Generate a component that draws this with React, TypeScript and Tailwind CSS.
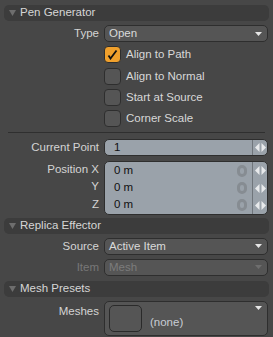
import React from "react";

const font = { fontFamily: '"Liberation Sans", Arial, sans-serif' };

function Header({ title }: { title: string }) {
  return (
    <div className="flex h-[16px] items-center rounded-[5px] bg-[#3c3c3c] pl-[5px] text-[11.5px] text-[#d6d6d6]">
      <svg width="7" height="6" viewBox="0 0 7 6" className="mr-[4px]">
        <path d="M0 0h7L3.5 6z" fill="#6e6e6e" />
      </svg>
      {title}
    </div>
  );
}

function Row({
  label,
  disabled,
  children,
}: {
  label: string;
  disabled?: boolean;
  children?: React.ReactNode;
}) {
  return (
    <div className="flex items-center">
      <div
        className={`w-[100px] shrink-0 pr-[5px] text-right text-[11.5px] ${
          disabled ? "text-[#777]" : "text-[#d4d4d4]"
        }`}
      >
        {label}
      </div>
      <div className="min-w-0 flex-1">{children}</div>
    </div>
  );
}

function DownArrow({ color = "#e6e6e6" }: { color?: string }) {
  return (
    <svg width="7" height="4" viewBox="0 0 7 4">
      <path d="M0 0h7L3.5 4z" fill={color} />
    </svg>
  );
}

function Select({ value, disabled }: { value: string; disabled?: boolean }) {
  return (
    <div
      className={`flex h-[17px] items-center justify-between rounded-[5px] border border-[#2e2e2e] bg-[#555555] pl-[4px] pr-[5px] text-[11.5px] ${
        disabled ? "text-[#7c7c7c]" : "text-[#dadada]"
      }`}
    >
      <span>{value}</span>
      <DownArrow color={disabled ? "#6e6e6e" : "#e6e6e6"} />
    </div>
  );
}

function Check({ label, on }: { label: string; on?: boolean }) {
  return (
    <Row label="">
      <div className="flex items-center gap-[5px]">
        <div
          className={`flex h-[17px] w-[17px] items-center justify-center rounded-[4px] border border-[#2e2e2e] ${
            on ? "bg-[#f0a02c]" : "bg-[#555555]"
          }`}
        >
          {on && (
            <svg width="11" height="11" viewBox="0 0 11 11">
              <path
                d="M1.5 6.5L3.5 9.5L9.5 1.5"
                fill="none"
                stroke="#111"
                strokeWidth="1.8"
              />
            </svg>
          )}
        </div>
        <span className="text-[11.5px] text-[#d8d8d8]">{label}</span>
      </div>
    </Row>
  );
}

function Spinner() {
  return (
    <div className="flex h-full w-[15px] items-center justify-center border-l border-[#6f757b]">
      <svg width="11" height="9" viewBox="0 0 11 9">
        <path d="M4.5 0v9L0 4.5z" fill="#e8eaec" />
        <path d="M6.5 0v9L11 4.5z" fill="#e8eaec" />
      </svg>
    </div>
  );
}

function Zero() {
  return (
    <div className="mr-[5px] h-[12px] w-[10px] rounded-full border-[3px] border-[#868c92]" />
  );
}

function NumRow({ value, zero }: { value: string; zero?: boolean }) {
  return (
    <div className="flex h-full items-stretch">
      <div className="flex flex-1 items-center pl-[9px] text-[11.5px] text-[#111]">
        {value}
      </div>
      {zero && (
        <div className="flex items-center">
          <Zero />
        </div>
      )}
      <Spinner />
    </div>
  );
}

export default function App() {
  return (
    <div
      className="h-[337px] w-[273px] overflow-hidden bg-[#474747] px-[4px] pt-[5px]"
      style={font}
    >
      <Header title="Pen Generator" />
      <div className="mt-[4px] pr-[1px]">
        <Row label="Type">
          <Select value="Open" />
        </Row>
      </div>
      <div className="mt-[4px] flex flex-col gap-[4px]">
        <Check label="Align to Path" on />
        <Check label="Align to Normal" />
        <Check label="Start at Source" />
        <Check label="Corner Scale" />
      </div>
      <div className="mx-[4px] mt-[5px] h-[1px] bg-[#2f2f2f]" />
      <div className="mt-[6px] pr-[1px]">
        <Row label="Current Point">
          <div className="h-[17px] overflow-hidden rounded-[5px] border border-[#2e2e2e] bg-[#9aa2aa]">
            <NumRow value="1" />
          </div>
        </Row>
      </div>
      <div className="mt-[4px] flex pr-[1px]">
        <div className="flex w-[100px] shrink-0 flex-col pr-[5px] text-right text-[11.5px] text-[#d4d4d4]">
          <div className="flex h-[18px] items-center justify-end">Position X</div>
          <div className="flex h-[17px] items-center justify-end">Y</div>
          <div className="flex h-[18px] items-center justify-end">Z</div>
        </div>
        <div className="flex h-[54px] flex-1 flex-col overflow-hidden rounded-[5px] border border-[#2e2e2e] bg-[#9aa2aa]">
          <div className="h-[18px]">
            <NumRow value="0 m" zero />
          </div>
          <div className="h-[17px]">
            <NumRow value="0 m" zero />
          </div>
          <div className="h-[17px]">
            <NumRow value="0 m" zero />
          </div>
        </div>
      </div>
      <div className="mt-[3px]">
        <Header title="Replica Effector" />
      </div>
      <div className="mt-[4px] flex flex-col gap-[4px] pr-[1px]">
        <Row label="Source">
          <Select value="Active Item" />
        </Row>
        <Row label="Item" disabled>
          <Select value="Mesh" disabled />
        </Row>
      </div>
      <div className="mt-[5px]">
        <Header title="Mesh Presets" />
      </div>
      <div className="mt-[4px] flex items-start pr-[1px]">
        <div className="w-[100px] shrink-0 pr-[5px] pt-[2px] text-right text-[11.5px] text-[#d4d4d4]">
          Meshes
        </div>
        <div className="flex h-[35px] flex-1 items-center rounded-[5px] border border-[#2e2e2e] bg-[#555555] pl-[4px] pr-[5px]">
          <div className="h-[27px] w-[33px] rounded-[5px] border border-[#2a2a2a]" />
          <div className="ml-[8px] mt-[8px] flex-1 text-[11.5px] text-[#c8ccd4]">(none)</div>
          <div className="self-start pt-[4px]">
            <DownArrow />
          </div>
        </div>
      </div>
    </div>
  );
}
